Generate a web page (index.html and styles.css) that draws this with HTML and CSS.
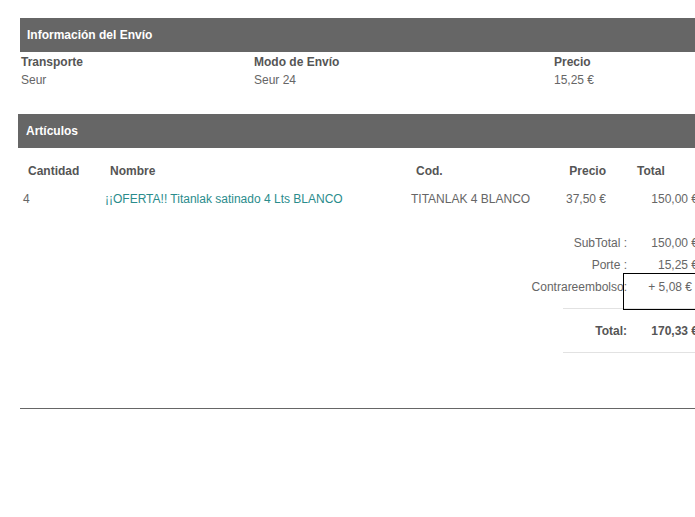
FILE: index.html
```html
<!DOCTYPE html>
<html lang="es">
<head>
<meta charset="utf-8">
<title>Pedido</title>
<link rel="stylesheet" href="styles.css">
</head>
<body>
<div class="page">
  <section class="envio">
    <div class="bar bar-envio">Información del Envío</div>
    <div class="info">
      <div class="info-col c1"><div class="lbl">Transporte</div><div class="val">Seur</div></div>
      <div class="info-col c2"><div class="lbl">Modo de Envío</div><div class="val">Seur 24</div></div>
      <div class="info-col c3"><div class="lbl">Precio</div><div class="val">15,25 €</div></div>
    </div>
  </section>
  <section class="articulos">
    <div class="bar bar-art">Artículos</div>
    <div class="tbl">
      <div class="th c-cant">Cantidad</div>
      <div class="th c-nom">Nombre</div>
      <div class="th c-cod">Cod.</div>
      <div class="th c-pre">Precio</div>
      <div class="th c-tot">Total</div>
      <div class="td c-cant">4</div>
      <div class="td c-nom"><a class="prod" href="#">¡¡OFERTA!! Titanlak satinado 4 Lts BLANCO</a></div>
      <div class="td c-cod">TITANLAK 4 BLANCO</div>
      <div class="td c-pre">37,50 €</div>
      <div class="td c-tot">150,00 €</div>
    </div>
    <div class="totals">
      <div class="t-lbl">SubTotal :</div><div class="t-val">150,00 €</div>
      <div class="t-lbl">Porte :</div><div class="t-val">15,25 €</div>
      <div class="t-lbl">Contrareembolso:</div><div class="t-val boxed">+ 5,08 €</div>
    </div>
    <div class="rule"></div>
    <div class="totals grand">
      <div class="t-lbl">Total:</div><div class="t-val">170,33 €</div>
    </div>
    <div class="rule"></div>
  </section>
  <div class="bottom-line"></div>
</div>
</body>
</html>
```
FILE: styles.css
```css
html { overflow: hidden; }
body {
  margin: 0;
  background: #fff;
  font-family: "Liberation Sans", Arial, sans-serif;
  font-size: 12px;
  color: #666;
}
.page { width: 720px; padding-top: 18px; }
.bar {
  height: 34px;
  line-height: 34px;
  background: #666;
  color: #fff;
  font-weight: bold;
}
.bar-envio { margin-left: 20px; padding-left: 7px; }
.bar-art { margin-left: 18px; padding-left: 8px; }
.info {
  display: grid;
  grid-template-columns: 233px 300px 1fr;
  margin-left: 21px;
  padding-top: 1px;
}
.info .lbl, .info .val { line-height: 18px; }
.lbl { font-weight: bold; color: #555; }
.val { color: #666; }
.articulos { margin-top: 25px; }
.tbl {
  display: grid;
  grid-template-columns: 87px 306px 140px 60px 87px;
  grid-auto-rows: 28px;
  margin-left: 18px;
  margin-top: 9px;
  line-height: 28px;
}
.th { font-weight: bold; color: #555; }
.td { color: #666; }
.th.c-cant { padding-left: 10px; }
.td.c-cant { padding-left: 5px; }
.th.c-nom { padding-left: 5px; }
.th.c-cod { padding-left: 5px; }
.c-pre { text-align: right; padding-right: 5px; }
.th.c-tot { padding-left: 26px; }
.td.c-tot { text-align: right; }
.prod { color: #2a8c8c; text-decoration: none; }
.totals {
  display: grid;
  grid-template-columns: 627px 71px;
  align-items: start;
  line-height: 22px;
  margin-top: 19px;
}
.t-lbl { text-align: right; }
.t-val { text-align: right; }
.boxed {
  margin: -3px 0 0 -4px;
  border: 1px solid #000;
  padding: 2px 5px 11px 0;
}
.rule {
  height: 1px;
  background: #e2e2e2;
  margin-left: 563px;
}
.totals + .rule { margin-top: -2px; }
.grand { margin-top: 11px; font-weight: bold; color: #555; }
.grand + .rule { margin-top: 10px; }
.bottom-line {
  height: 1px;
  background: #666;
  margin: 55px 0 0 20px;
}
```
